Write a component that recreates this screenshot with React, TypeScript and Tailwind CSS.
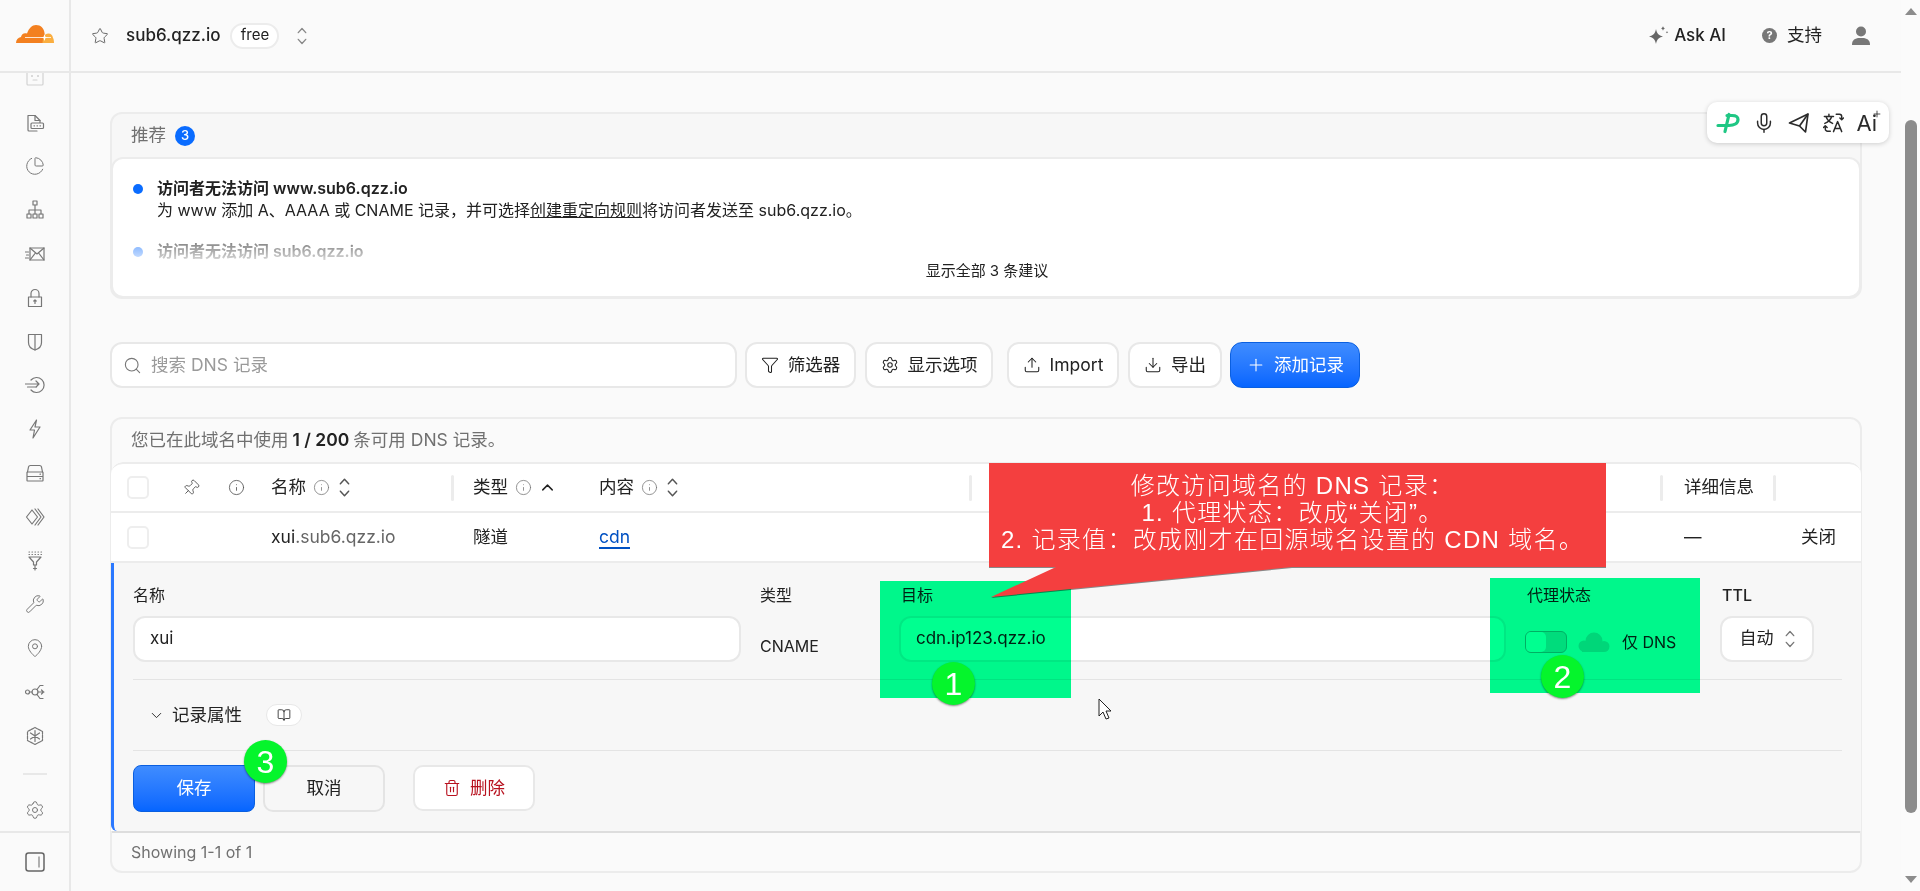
import {
  BookOpen,
  ChartPie,
  ChevronDown,
  ChevronUp,
  Download,
  Funnel,
  Info,
  MapPin,
  Mic,
  Pin,
  Plus,
  Search,
  Settings,
  Star,
  Trash2,
  Upload,
  Wrench,
} from "lucide-react";
import type { ReactNode } from "react";

const Svg = ({ children }: { children: ReactNode }) => (
  <svg width="20" height="20" viewBox="0 0 20 20" fill="none" stroke="currentColor" strokeWidth="1.2" strokeLinecap="round" strokeLinejoin="round">
    {children}
  </svg>
);

const UpDown = ({ h, w, className }: { h: number; w: number; className: string }) => (
  <svg className={className} width={w} height={h} viewBox="0 0 12 22" fill="none" stroke="currentColor" strokeWidth="1.6" strokeLinecap="round" strokeLinejoin="round">
    <path d="M1.500 7L6 2l4.500 5M1.500 15L6 20l4.500-5" />
  </svg>
);

// sidebar icons that lucide has no close match for
const BotIcon = () => (
  <Svg>
    <rect x="2" y="2" width="16" height="14" rx="1" />
    <circle cx="7" cy="7" r="0.5" />
    <circle cx="13" cy="7" r="0.5" />
    <path d="M8 11h4" />
  </Svg>
);
const FileBoxIcon = () => (
  <Svg>
    <path d="M12 18H4a1 1 0 0 1-1-1V2.500h7l5 5v2" />
    <path d="M10 2.500V7.500h5" />
    <rect x="6" y="10" width="12.500" height="5.500" rx="1" />
    <path d="M9 12.800h.5M12 12.800h.5M15 12.800h.5" />
  </Svg>
);
const TreeIcon = () => (
  <Svg>
    <rect x="8" y="1" width="4" height="4" />
    <path d="M10 5v5M4 14v-4h12v4M10 10v4" />
    <rect x="2" y="14" width="4" height="4" />
    <rect x="8" y="14" width="4" height="4" />
    <rect x="14" y="14" width="4" height="4" />
  </Svg>
);
const MailSpeedIcon = () => (
  <Svg>
    <rect x="5" y="4" width="14" height="12" />
    <path d="M5 4l7 6 7-6M5 16l5-6.500M19 16l-5-6.500M0.500 8h3M1.500 11h2M0.500 14h3" />
  </Svg>
);
const LockIcon = () => (
  <Svg>
    <rect x="3.500" y="9" width="13" height="9.500" />
    <path d="M6 9V5.500a4 4 0 0 1 8 0V9M10 15.500v-3.500M8.800 13l1.200-1.200 1.200 1.200" />
  </Svg>
);
const ShieldIcon = () => (
  <Svg>
    <path d="M3.500 2.500h13v8c0 4-3 6.500-6.500 7.500-3.500-1-6.500-3.500-6.500-7.500z" />
    <path d="M10 2.500v15.500" />
  </Svg>
);
const ArrowCircleIcon = () => (
  <Svg>
    <path d="M6 5a7.500 7.500 0 1 1 0 10" />
    <path d="M0.500 9h13M2.500 12h9M11 6l3 3-3 3" />
  </Svg>
);
const BoltIcon = () => (
  <Svg>
    <path d="M11.500 1L5 11h4.500L8 19l7-11h-5z" />
  </Svg>
);
const StackIcon = () => (
  <Svg>
    <path d="M2.500 9l1-5a2 2 0 0 1 2-1.500h9a2 2 0 0 1 2 1.500l1 5" />
    <rect x="2" y="9" width="16" height="4.500" rx="0.500" />
    <rect x="2" y="13.500" width="16" height="4.500" rx="0.500" />
    <path d="M15 11.200h.5M15 15.700h.5" />
  </Svg>
);
const DiamondsIcon = () => (
  <Svg>
    <path d="M7 3L1.500 10 7 17l5.500-7z" />
    <path d="M10 2l6 8-6 8M13 2l6 8-6 8" />
  </Svg>
);
const FilterDotsIcon = () => (
  <Svg>
    <path d="M4 1h.5M7 1h.5M10 1h.5M13 1h.5M16 1h.5M4 3.500h.5M7 3.500h.5M10 3.500h.5M13 3.500h.5M16 3.500h.5" />
    <path d="M4 6h12l-4.500 5v3h-3v-3z" />
    <path d="M10 14v5M8.500 17.500h3" />
  </Svg>
);
const NodesIcon = () => (
  <Svg>
    <circle cx="2.500" cy="10" r="2" />
    <circle cx="10" cy="10" r="3" />
    <path d="M4.500 10h2.500M12 7.500l3-4h3M12 12.500l3 4h3M13 10h6M16.500 8l2 2-2 2" />
  </Svg>
);
const HexSnowIcon = () => (
  <Svg>
    <path d="M10 1.500l7.500 4v9l-7.500 4-7.500-4v-9z" strokeDasharray="3 1" />
    <path d="M10 4.500v11M5.500 7l9 6M14.500 7l-9 6" />
  </Svg>
);

const sideIcon = { size: 20, strokeWidth: 1.2 };

const navIcons = [
  <BotIcon />,
  <FileBoxIcon />,
  <ChartPie {...sideIcon} />,
  <TreeIcon />,
  <MailSpeedIcon />,
  <LockIcon />,
  <ShieldIcon />,
  <ArrowCircleIcon />,
  <BoltIcon />,
  <StackIcon />,
  <DiamondsIcon />,
  <FilterDotsIcon />,
  <Wrench {...sideIcon} />,
  <MapPin {...sideIcon} />,
  <NodesIcon />,
  <HexSnowIcon />,
];

const Sidebar = () => (
  <aside className="flex w-[71px] shrink-0 flex-col border-r-2 border-[#e8e8e8] text-[#777777]">
    <div className="h-[716px] overflow-hidden">
      <div className="-mt-[16px] flex flex-col items-center">
        {navIcons.map((icon, i) => (
          <div key={i} className={i === 0 ? "flex h-[43.800px] items-center opacity-30" : "flex h-[43.800px] items-center"}>
            {icon}
          </div>
        ))}
        <div className="mt-[15px] h-[2px] w-[24px] bg-[#e8e8e8]" />
      </div>
    </div>
    <div className="flex h-[44px] items-center justify-center border-b-2 border-[#e8e8e8]">
      <Settings {...sideIcon} />
    </div>
    <div className="flex flex-1 items-center justify-center text-[#666666]">
      <svg width="20" height="20" viewBox="0 0 20 20" fill="none" stroke="currentColor" strokeWidth="1.500">
        <rect x="1" y="1" width="18" height="18" rx="2.500" />
        <path d="M14 4.500v11" strokeWidth="1" />
      </svg>
    </div>
  </aside>
);

const Logo = () => (
  <svg width="38" height="18" viewBox="0 0 38 18">
    <path d="M0 18c0-3.500 2-5.500 5-6 .5-3 3-4.500 6-3.500C13 3 16 0 20 0c5 0 8 3.500 8.500 8l2 10z" fill="#f38020" />
    <path d="M26.500 18c.5-5 1.500-9.500 6-9.500 2.500 0 4 1.500 4.500 4.500.7.8 1 3 1 5z" fill="#faae40" />
    <path d="M9 12.500h26" stroke="#fff" strokeWidth="0.8" />
    <path d="M28.500 9l1 3 3 .5-3 .5-1 3-1-3-3-.5 3-.5z" fill="#fff" />
  </svg>
);

const Header = () => (
  <header className="flex h-[73px] shrink-0 border-b-2 border-[#e8e8e8]">
    <div className="flex w-[71px] shrink-0 items-center justify-center border-r-2 border-[#e8e8e8] pb-[3px]">
      <Logo />
    </div>
    <div className="flex flex-1 items-center pl-[20px] pr-[31px]">
      <Star size={18} strokeWidth={1.3} className="text-[#666666]" />
      <span className="ml-[17px] text-[17px] font-medium text-[#222222]">sub6.qzz.io</span>
      <span className="ml-[10px] flex h-[26px] w-[49px] items-center justify-center rounded-full border-2 border-[#ececec] bg-white text-[15px] text-[#222222]">
        free
      </span>
      <UpDown w={10} h={20} className="ml-[18px] text-[#888888]" />
      <div className="ml-auto flex items-center text-[#222222]">
        <svg width="22" height="22" viewBox="0 0 22 22" fill="#666666">
          <path d="M9 4c.8 4.200 2.500 6.500 7 7.500-4.500 1-6.200 3.300-7 7.500-.8-4.200-2.500-6.500-7-7.500C6.500 10.500 8.200 8.200 9 4z" />
          <path d="M16 1c.3 1.500.8 2 2 2.400-1.200.4-1.700.9-2 2.400-.3-1.500-.8-2-2-2.400 1.200-.4 1.700-.9 2-2.400zM20 6c.2.800.4 1 1.200 1.300-.8.3-1 .5-1.200 1.300-.2-.8-.4-1-1.200-1.300.8-.3 1-.5 1.200-1.300z" />
        </svg>
        <span className="ml-[5px] text-[17px] font-medium">Ask AI</span>
        <span className="ml-[36px] flex h-[15px] w-[15px] items-center justify-center rounded-full bg-[#777777] text-[11px] font-bold text-white">?</span>
        <span className="ml-[10px] text-[17.500px]">支持</span>
        <svg className="ml-[30px]" width="18" height="19" viewBox="0 0 18 19" fill="#777777">
          <circle cx="9" cy="5.500" r="5" />
          <path d="M0 19c0-4 1.500-6 6-7h6c4.500 1 6 3 6 7z" />
        </svg>
      </div>
    </div>
  </header>
);

const Recommendations = () => (
  <section className="h-[187px] rounded-[12px] border-2 border-[#ececec] bg-[#f7f7f7]">
    <div className="flex h-[43px] items-center pl-[19px] text-[17.500px] text-[#707070]">
      推荐
      <span className="ml-[9px] flex h-[20px] w-[20px] items-center justify-center rounded-full bg-[#0a6cff] text-[13px] font-medium text-white">3</span>
    </div>
    <div className="relative -mx-[1px] h-[141px] rounded-[12px] border-2 border-[#ececec] bg-white pl-[20px] pt-[18px] text-[16px] leading-[22px] text-[#222222]">
      <div className="flex">
        <span className="mr-[14px] mt-[7px] h-[10px] w-[10px] rounded-full bg-[#0a6cff]" />
        <div>
          <div className="font-semibold">访问者无法访问 www.sub6.qzz.io</div>
          <div>
            为 www 添加 A、AAAA 或 CNAME 记录，并可选择<span className="underline">创建重定向规则</span>将访问者发送至 sub6.qzz.io。
          </div>
        </div>
      </div>
      <div className="relative mt-[19px] flex h-[22px] overflow-hidden">
        <span className="mr-[14px] mt-[7px] h-[10px] w-[10px] rounded-full bg-[#0a6cff]" />
        <div className="font-semibold">访问者无法访问 sub6.qzz.io</div>
        <div className="absolute inset-0 bg-linear-to-b from-white/40 to-white/85" />
      </div>
      <div className="-ml-[18px] text-center text-[15px] leading-[18px]">显示全部 3 条建议</div>
    </div>
  </section>
);

const ToolButton = ({ icon, label, className }: { icon: ReactNode; label: string; className: string }) => (
  <button className={`flex h-[46px] items-center justify-center gap-[9px] rounded-[12px] border-2 border-[#e8e8e8] bg-white text-[17.500px] text-[#222222] ${className}`}>
    {icon}
    {label}
  </button>
);

const toolIcon = { size: 18, strokeWidth: 1.4 };

const Toolbar = () => (
  <div className="mt-[43px] flex h-[46px]">
    <div className="flex w-[627px] items-center rounded-[12px] border-2 border-[#e8e8e8] bg-white pl-[11px] text-[17.500px] text-[#9a9a9a]">
      <Search size={19} strokeWidth={1.4} className="text-[#777777]" />
      <span className="ml-[9px]">搜索 DNS 记录</span>
    </div>
    <ToolButton className="ml-[8px] w-[111px]" icon={<Funnel {...toolIcon} />} label="筛选器" />
    <ToolButton className="ml-[9px] w-[128px]" icon={<Settings {...toolIcon} />} label="显示选项" />
    <ToolButton className="ml-[14px] w-[112px]" icon={<Upload {...toolIcon} />} label="Import" />
    <ToolButton className="ml-[9px] w-[94px]" icon={<Download {...toolIcon} />} label="导出" />
    <button className="ml-[8px] flex h-[46px] w-[130px] items-center justify-center gap-[8px] rounded-[12px] border border-[#0a5fe0] bg-linear-to-b from-[#3f8cff] to-[#0565ff] text-[17.500px] text-white">
      <Plus size={20} strokeWidth={1.3} />
      添加记录
    </button>
  </div>
);

const HeadInfo = () => <Info size={17} strokeWidth={1.1} className="ml-[7px] text-[#777777]" />;
const Sep = () => <span className="ml-auto h-[26px] w-[3px] rounded-full bg-[#ececec]" />;
const Box = () => <span className="block h-[23px] w-[22px] rounded-[5px] border-2 border-[#eeeeee] bg-white" />;
const rowGrid = "grid grid-cols-[60px_40px_50px_202px_126px_392px_693px_111px_1fr] items-center";

const TableHead = () => (
  <div className={`${rowGrid} h-[51px] rounded-t-[12px] border-y-2 border-[#ececec] text-[17.500px] text-[#222222]`}>
    <div className="pl-[16px]"><Box /></div>
    <div className="flex justify-center"><Pin size={18} strokeWidth={1.2} className="rotate-45 text-[#555555]" /></div>
    <div className="flex justify-center"><Info size={17} strokeWidth={1.2} className="text-[#555555]" /></div>
    <div className="flex items-center pl-[10px] pr-[9px]">
      名称<HeadInfo />
      <UpDown w={11} h={21} className="ml-[9px] text-[#555555]" />
      <Sep />
    </div>
    <div className="flex items-center pl-[10px]">
      类型<HeadInfo />
      <ChevronUp size={19} strokeWidth={1.8} className="ml-[6px] text-[#222222]" />
    </div>
    <div className="flex items-center pl-[10px] pr-[9px]">
      内容<HeadInfo />
      <UpDown w={11} h={21} className="ml-[9px] text-[#555555]" />
      <Sep />
    </div>
    <div className="flex items-center pr-[11px]"><Sep /></div>
    <div className="flex items-center pl-[10px] pr-[9px]">详细信息<Sep /></div>
    <div />
  </div>
);

const TableRow = () => (
  <div className={`${rowGrid} h-[50px] border-b-2 border-[#ececec] text-[17.500px] text-[#222222]`}>
    <div className="pl-[16px]"><Box /></div>
    <div />
    <div />
    <div className="pl-[10px]">xui<span className="text-[#666666]">.sub6.qzz.io</span></div>
    <div className="pl-[10px]">隧道</div>
    <div className="pl-[10px]"><span className="border-b-2 border-[#0051c3] text-[#0051c3]">cdn</span></div>
    <div />
    <div className="pl-[10px]">—</div>
    <div className="pl-[16px]">关闭</div>
  </div>
);

const fieldInput = "flex h-[46px] items-center rounded-[12px] border-2 border-[#e8e8e8] bg-white text-[17px] text-[#222222]";
const fieldLabel = "mb-[11px] h-[20px] text-[16px] leading-[20px] text-[#222222]";

const EditPanel = () => (
  <div className="h-[268px] rounded-bl-[6px] border-l-[3px] border-[#2a78ff] bg-[#f7f7f7] pl-[19px] pr-[19px] pt-[22px]">
    <div className="flex">
      <div className="mr-[19px] w-[608px]">
        <div className={fieldLabel}>名称</div>
        <div className={`${fieldInput} pl-[15px]`}>xui</div>
      </div>
      <div className="w-[139px]">
        <div className={fieldLabel}>类型</div>
        <div className="flex h-[46px] items-center pt-[13px] text-[16px] text-[#222222]">CNAME</div>
      </div>
      <div className="mr-[19px] w-[607px]">
        <div className={`${fieldLabel} pl-[2px]`}>目标</div>
        <div className={`${fieldInput} pl-[15px]`}>cdn.ip123.qzz.io</div>
      </div>
      <div className="w-[195px]">
        <div className={`${fieldLabel} pl-[2px]`}>代理状态</div>
        <div className="flex h-[46px] items-center pt-[6px]">
          <div className="flex h-[22px] w-[42px] rounded-[6px] border border-[#b0b0b0] bg-[#dcdcdc]">
            <div className="h-full w-[20px] rounded-[5px] bg-white" />
          </div>
          <svg className="ml-[9px]" width="34" height="20" viewBox="0 0 34 20" fill="#d6d6d6">
            <circle cx="18" cy="9" r="8.500" />
            <circle cx="8" cy="14" r="5.500" />
            <circle cx="28" cy="14.500" r="5.500" />
            <rect x="6" y="14" width="22" height="6" />
          </svg>
          <span className="ml-[12px] text-[16px] text-[#222222]">仅 DNS</span>
        </div>
      </div>
      <div className="w-[94px]">
        <div className={`${fieldLabel} pl-[2px] font-medium`}>TTL</div>
        <div className={`${fieldInput} justify-center gap-[11px] text-[17.500px]`}>
          自动
          <UpDown w={10} h={20} className="text-[#777777]" />
        </div>
      </div>
    </div>

    <div className="mt-[17px] flex h-[72px] items-center border-y border-[#e4e4e4] pl-[15px] text-[17.500px] text-[#222222]">
      <ChevronDown size={17} strokeWidth={1.3} />
      <span className="ml-[7px]">记录属性</span>
      <span className="ml-[24px] flex h-[22px] w-[36px] items-center justify-center rounded-full border border-[#e8e8e8] bg-white">
        <BookOpen size={14} strokeWidth={1.4} />
      </span>
    </div>

    <div className="mt-[14px] flex text-[17.500px]">
      <button className="h-[47px] w-[122px] rounded-[8px] border border-[#0a5fe0] bg-linear-to-b from-[#3f8cff] to-[#0565ff] text-white">保存</button>
      <button className="ml-[8px] h-[47px] w-[122px] rounded-[10px] border-2 border-[#e4e4e4] text-[#222222]">取消</button>
      <button className="ml-[28px] flex h-[46px] w-[122px] items-center justify-center gap-[9px] rounded-[10px] border-2 border-[#e8e8e8] bg-white text-[#b8121f]">
        <Trash2 size={18} strokeWidth={1.5} />
        删除
      </button>
    </div>
  </div>
);

const DnsTable = () => (
  <section className="mt-[29px] h-[456px] rounded-[12px] border-2 border-[#ececec] bg-[#fafafa]">
    <div className="flex h-[43px] items-center pl-[19px] text-[17.500px] text-[#707070]">
      您已在此域名中使用<b className="mx-[4px] font-semibold text-[#222222]">1 / 200</b>条可用 DNS 记录。
    </div>
    <div className="-mx-[1px] overflow-hidden rounded-t-[12px] bg-white">
      <TableHead />
      <TableRow />
      <EditPanel />
    </div>
    <div className="flex h-[40px] items-center border-t-2 border-[#dddddd] pl-[19px] text-[16px] text-[#707070]">Showing 1-1 of 1</div>
  </section>
);

const Scrollbar = () => (
  <div className="flex w-[19px] shrink-0 flex-col items-center bg-[#fbfbfb]">
    <div className="mt-[8px] h-0 w-0 border-x-[6px] border-b-[7px] border-x-transparent border-b-[#8c8c8c]" />
    <div className="mt-[105px] h-[693px] w-[12px] rounded-full bg-[#8c8c8c]" />
    <div className="mt-[63px] h-0 w-0 border-x-[6px] border-t-[7px] border-x-transparent border-t-[#8c8c8c]" />
  </div>
);

const FloatingTools = () => (
  <div className="absolute left-[1707px] top-[102px] flex h-[41px] w-[182px] items-center justify-between rounded-[10px] bg-white pl-[9px] pr-[9px] text-[#2b2b2b] shadow-[0_1px_5px_rgba(0,0,0,0.18)]">
    <svg width="24" height="24" viewBox="0 0 24 24" fill="none" stroke="#1fc784" strokeWidth="3.200" strokeLinecap="round">
      <path d="M2 14.500h11c5 0 9-2 9-6 0-3-3-4-6-4h-5" />
      <path d="M13 3.500L9 20.500" />
    </svg>
    <Mic size={22} strokeWidth={1.6} />
    <svg width="22" height="22" viewBox="0 0 22 22" fill="none" stroke="currentColor" strokeWidth="1.7" strokeLinejoin="round">
      <path d="M1.500 11L20 2l-2.500 18-6-6z" />
      <path d="M20 2L11.500 14" />
    </svg>
    <svg width="21" height="21" viewBox="0 0 23 23" fill="none" stroke="currentColor" strokeWidth="1.600" strokeLinecap="round" strokeLinejoin="round">
      <path d="M1.500 5h10M6.500 2.500V5M9.500 5c-1 3.500-3.500 6-7.500 7.500M3.500 5.500c1 3 3.500 5.500 7 7" />
      <path d="M14.500 2.500H18a2.500 2.500 0 0 1 2.500 2.500v3M18.500 6.500l2 2 2-2" />
      <path d="M8 21H5a2.500 2.500 0 0 1-2.500-2.500V15M.5 17l2-2 2 2" />
      <path d="M11.500 21.500l4.500-11 4.500 11M13 18h6" />
    </svg>
    <span className="relative pr-[3px] text-[22px] leading-none">
      Ai
      <Plus size={10} strokeWidth={2} className="absolute -right-[2px] -top-[3px]" />
    </span>
  </div>
);

const Marker = ({ n, className }: { n: number; className: string }) => (
  <div className={`absolute flex h-[43px] w-[43px] items-center justify-center rounded-full bg-[#05f52c] font-['Liberation_Sans',sans-serif] text-[32px] leading-none text-white shadow-[0_1px_2px_rgba(0,0,0,0.45)] ${className}`}>
    {n}
  </div>
);

const Annotations = () => (
  <>
    <div className="absolute left-[880px] top-[581px] h-[117px] w-[191px] bg-[#00ff90] mix-blend-multiply" />
    <div className="absolute left-[1490px] top-[578px] h-[115px] w-[210px] bg-[#00ff90] mix-blend-multiply" />
    <svg className="absolute left-[989px] top-[463px] drop-shadow-[0_1px_0_rgba(0,0,0,0.45)]" width="617" height="136" viewBox="0 0 617 136">
      <path d="M0 0H617V104H303L2 134 67 104H0z" fill="#f43f3f" />
    </svg>
    <div className="absolute left-[989px] top-[463px] w-[617px] pr-[10px] pt-[9px] text-center font-['Liberation_Sans','Noto_Sans_CJK_SC',sans-serif] text-[24px] font-light leading-[27px] tracking-[1.300px] text-white">
      <div>修改访问域名的 DNS 记录：</div>
      <div>1. 代理状态：改成“关闭”。</div>
      <div>2. 记录值：改成刚才在回源域名设置的 CDN 域名。</div>
    </div>
    <Marker n={1} className="left-[932px] top-[662px]" />
    <Marker n={2} className="left-[1541px] top-[655px]" />
    <Marker n={3} className="left-[244px] top-[740px]" />
    <svg className="absolute left-[1098px] top-[698px]" width="14" height="24" viewBox="0 0 14 24">
      <path d="M1 1v17l4-4 3 7 3-1-3-7h5z" fill="#fff" stroke="#222" strokeWidth="1" />
    </svg>
  </>
);

export default function App() {
  return (
    <div className="relative flex h-[891px] overflow-hidden bg-[#fafafa] font-[Inter,'Noto_Sans_CJK_SC',sans-serif]">
      <div className="flex min-w-0 flex-1 flex-col">
        <Header />
        <div className="flex min-h-0 flex-1">
          <Sidebar />
          <main className="min-w-0 flex-1 pl-[39px] pr-[39px] pt-[39px]">
            <Recommendations />
            <Toolbar />
            <DnsTable />
          </main>
        </div>
      </div>
      <Scrollbar />
      <FloatingTools />
      <Annotations />
    </div>
  );
}
